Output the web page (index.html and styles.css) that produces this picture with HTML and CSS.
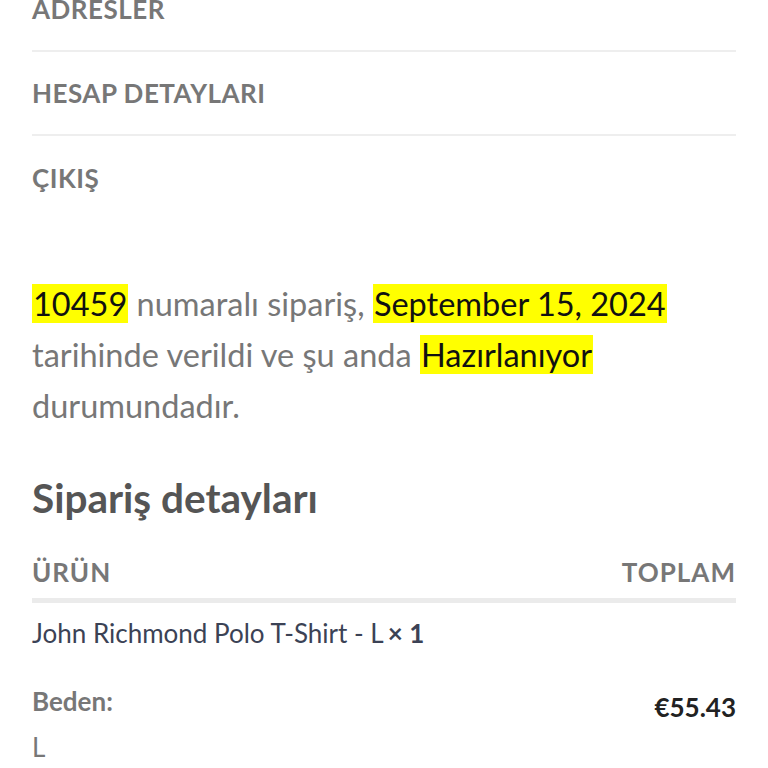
FILE: index.html
```html
<!DOCTYPE html>
<html lang="tr">
<head>
    <meta charset="UTF-8">
    <meta name="viewport" content="width=device-width, initial-scale=1.0">
    <title>Hesabım</title>
    <link rel="stylesheet" href="styles.css">
</head>
<body>
    <div class="page">
        <ul class="account-nav">
            <li class="nav-item"><a href="#">Adresler</a></li>
            <li class="nav-item"><a href="#">Hesap detayları</a></li>
            <li class="nav-item"><a href="#">Çıkış</a></li>
        </ul>

        <p class="order-status">
            <mark>10459</mark> numaralı sipariş, <mark>September 15, 2024</mark>
            tarihinde verildi ve şu anda <mark>Hazırlanıyor</mark> durumundadır.
        </p>

        <h2 class="section-title">Sipariş detayları</h2>

        <div class="order-table">
            <div class="table-head">
                <span>Ürün</span>
                <span>Toplam</span>
            </div>
            <div class="table-row">
                <div class="product">
                    <a href="#" class="product-name">John Richmond Polo T-Shirt - L</a>
                    <strong class="qty">× 1</strong>
                    <div class="meta">
                        <div class="meta-label">Beden:</div>
                        <div class="meta-value">L</div>
                    </div>
                </div>
                <div class="price">€55.43</div>
            </div>
        </div>
    </div>
</body>
</html>
```

FILE: styles.css
```css
* {
    margin: 0;
    padding: 0;
    box-sizing: border-box;
}
body {
    font-family: 'Lato', 'Liberation Sans', sans-serif;
    background: #fff;
    color: #777;
    overflow: hidden;
}
.page {
    padding: 0 32px;
    margin-top: -32px;
}
.account-nav {
    list-style: none;
}
.nav-item {
    border-bottom: 2px solid #eee;
    height: 84px;
    display: flex;
    align-items: center;
}
.nav-item:last-child {
    border-bottom: none;
}
.nav-item a {
    color: #777;
    text-decoration: none;
    text-transform: uppercase;
    font-weight: bold;
    font-size: 26px;
    letter-spacing: 0.5px;
}
.order-status {
    margin-top: 58px;
    font-size: 32.5px;
    line-height: 51px;
}
.order-status mark {
    background: #ffff00;
    color: #111;
    padding: 0 1px;
}
.section-title {
    margin-top: 43px;
    font-size: 40.5px;
    line-height: 48px;
    font-weight: bold;
    color: #555;
}
.order-table {
    margin-top: 34px;
}
.table-head {
    display: flex;
    justify-content: space-between;
    text-transform: uppercase;
    font-weight: bold;
    font-size: 26px;
    line-height: 32px;
    letter-spacing: 1px;
    padding-bottom: 10px;
    border-bottom: 5px solid #ebebeb;
}
.table-row {
    display: flex;
    justify-content: space-between;
    align-items: flex-start;
    padding-top: 11px;
}
.product-name,
.qty {
    color: #3b4255;
    text-decoration: none;
    font-size: 26px;
    line-height: 39px;
}
.meta {
    margin-top: 25px;
    font-size: 26px;
    line-height: 46px;
}
.meta-label {
    font-weight: bold;
}
.price {
    margin-top: 74px;
    font-size: 26px;
    line-height: 39px;
    font-weight: bold;
    color: #222;
}
```
